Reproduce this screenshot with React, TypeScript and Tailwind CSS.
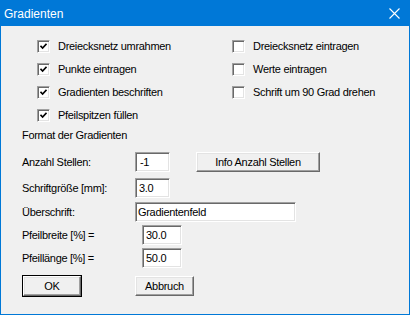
import React from 'react'

export default function App() {
  return (
    <div className="w-[410px] h-[315px] flex flex-col border border-[#0078d7] bg-[#f0f0f0] font-['Liberation_Sans',Arial,sans-serif] text-black">
      <div className="h-[25px] shrink-0 bg-[#0078d7] flex items-center justify-between pl-[3px] pr-[9px]">
        <span className="text-[12px] text-white">Gradienten</span>
        <svg width="11" height="11" viewBox="0 0 11 11">
          <path d="M0.5 0.5 L10.5 10.5 M10.5 0.5 L0.5 10.5" stroke="white" strokeWidth="1.1" />
        </svg>
      </div>

      <div className="flex-1 text-[11px] tracking-[-0.3px] pt-[9px]">
        <div className="flex pl-[36px]">
          <div className="w-[195px] flex flex-col">
            <Check checked label="Dreiecksnetz umrahmen" />
            <Check checked label="Punkte eintragen" />
            <Check checked label="Gradienten beschriften" />
            <Check checked label="Pfeilspitzen füllen" />
          </div>
          <div className="flex flex-col">
            <Check label="Dreiecksnetz eintragen" />
            <Check label="Werte eintragen" />
            <Check label="Schrift um 90 Grad drehen" />
          </div>
        </div>

        <div className="pl-[21px]">
          <div className="h-[16px] leading-[16px]">Format der Gradienten</div>

          <div className="flex items-center h-[20px] mt-[9px]">
            <span className="w-[113px]">Anzahl Stellen:</span>
            <Field value="-1" className="w-[35px] pl-[4px]" />
            <Button className="ml-[26px] w-[124px]">Info Anzahl Stellen</Button>
          </div>
          <div className="flex items-center h-[20px] mt-[6px]">
            <span className="w-[113px]">Schriftgröße [mm]:</span>
            <Field value="3.0" className="w-[35px] pl-[3px]" />
          </div>
          <div className="flex items-center h-[20px] mt-[4px]">
            <span className="w-[113px]">Überschrift:</span>
            <Field value="Gradientenfeld" className="w-[161px] pl-[2px]" />
          </div>
          <div className="flex items-center h-[20px] mt-[3px]">
            <span className="w-[120px]">Pfeilbreite [%] =</span>
            <Field value="30.0" className="w-[40px] pl-[3px]" />
          </div>
          <div className="flex items-center h-[20px] mt-[3px]">
            <span className="w-[120px]">Pfeillänge [%] =</span>
            <Field value="50.0" className="w-[40px] pl-[3px]" />
          </div>

          <div className="flex items-center mt-[7px]">
            <div className="border border-black">
              <Button className="w-[58px]">OK</Button>
            </div>
            <Button className="ml-[53px] w-[59px]">Abbruch</Button>
          </div>
        </div>
      </div>
    </div>
  )
}

function Check({ checked, label }: { checked?: boolean; label: string }) {
  return (
    <div className="h-[23px] flex items-center">
      <div className="w-[13px] h-[13px] bg-white border border-t-[#a0a0a0] border-l-[#a0a0a0] border-b-white border-r-white shadow-[inset_1px_1px_0_#696969,inset_-1px_-1px_0_#e3e3e3] flex items-center justify-center">
        {checked && (
          <svg width="7" height="7" viewBox="0 0 7 7">
            <path d="M0.5 2.8 L2.6 5 L6.5 0.8" stroke="black" strokeWidth="1.6" fill="none" />
          </svg>
        )}
      </div>
      <span className="ml-[8px] whitespace-nowrap">{label}</span>
    </div>
  )
}

function Field({ value, className }: { value: string; className: string }) {
  return (
    <div className={`h-[20px] flex items-center bg-white border border-t-[#a0a0a0] border-l-[#a0a0a0] border-b-white border-r-white shadow-[inset_1px_1px_0_#696969,inset_-1px_-1px_0_#e3e3e3] ${className}`}>
      {value}
    </div>
  )
}

function Button({ children, className }: { children: React.ReactNode; className: string }) {
  return (
    <div className={`h-[20px] flex items-center justify-center bg-[#f0f0f0] border border-t-white border-l-white border-b-[#696969] border-r-[#696969] shadow-[inset_-1px_-1px_0_#a0a0a0,inset_1px_1px_0_#e3e3e3] ${className}`}>
      {children}
    </div>
  )
}
